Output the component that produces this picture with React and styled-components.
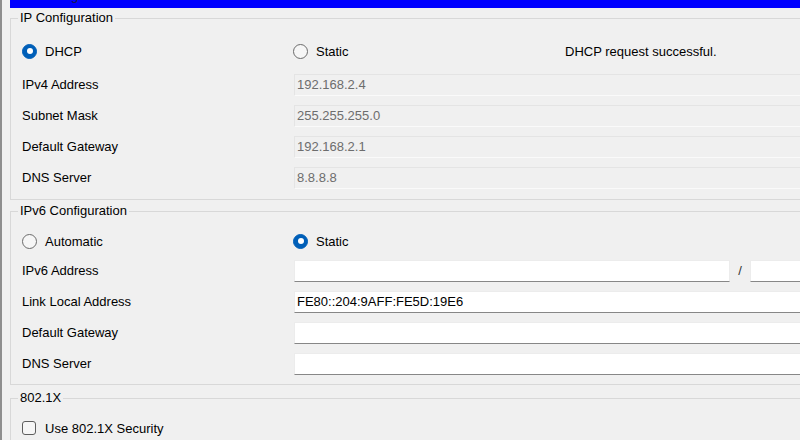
import styled, { createGlobalStyle } from "styled-components";

const GlobalStyle = createGlobalStyle`
  html, body {
    margin: 0;
    background: #f0f0f0;
    overflow: hidden;
  }
  body {
    font-family: "Liberation Sans", Arial, sans-serif;
    font-size: 13px;
    color: #000;
  }
`;

const ipv4Fields = [
  { label: "IPv4 Address", value: "192.168.2.4" },
  { label: "Subnet Mask", value: "255.255.255.0" },
  { label: "Default Gateway", value: "192.168.2.1" },
  { label: "DNS Server", value: "8.8.8.8" },
];

const ipv6Fields = [
  { label: "Link Local Address", value: "FE80::204:9AFF:FE5D:19E6" },
  { label: "Default Gateway", value: "" },
  { label: "DNS Server", value: "" },
];

const RadioOption = ({ checked, children }) => (
  <Option>
    <Radio $checked={checked} />
    <span>{children}</span>
  </Option>
);

const Field = ({ label, value, disabled }) => (
  <FieldRow>
    <Label>{label}</Label>
    <TextBox readOnly value={value} disabled={disabled} />
  </FieldRow>
);

const App = () => {
  return (
    <>
      <GlobalStyle />
      <Window>
        <Content>
          <TitleBar>
            <TitleText>IP Configuration</TitleText>
          </TitleBar>

          <Group $top={2}>
            <Legend>IP Configuration</Legend>
            <GroupBody $padTop={13} $padBottom={6}>
              <RadioRow $after={6}>
                <RadioOption checked>DHCP</RadioOption>
                <RadioOption>Static</RadioOption>
                <Status>DHCP request successful.</Status>
              </RadioRow>
              {ipv4Fields.map((f) => (
                <Field key={f.label} label={f.label} value={f.value} disabled />
              ))}
            </GroupBody>
          </Group>

          <Group $top={3}>
            <Legend>IPv6 Configuration</Legend>
            <GroupBody $padTop={10} $padBottom={5}>
              <RadioRow $after={2}>
                <RadioOption>Automatic</RadioOption>
                <RadioOption checked>Static</RadioOption>
              </RadioRow>
              <FieldRow>
                <Label>IPv6 Address</Label>
                <SplitInput>
                  <TextBox readOnly value="" $width={436} />
                  <Slash>/</Slash>
                  <TextBox readOnly value="" />
                </SplitInput>
              </FieldRow>
              {ipv6Fields.map((f) => (
                <Field key={f.label} label={f.label} value={f.value} />
              ))}
            </GroupBody>
          </Group>

          <Group $top={5}>
            <Legend>802.1X</Legend>
            <GroupBody $padTop={10} $padBottom={6}>
              <CheckRow>
                <CheckBox />
                <span>Use 802.1X Security</span>
              </CheckRow>
            </GroupBody>
          </Group>
        </Content>
      </Window>
    </>
  );
};

const Window = styled.div`
  width: 800px;
  height: 440px;
  overflow: hidden;
  box-sizing: border-box;
  border-left: 2px solid #8e8e8e;
  background: #f0f0f0;
`;

const Content = styled.div`
  width: 860px;
  padding-left: 8px;
`;

const TitleBar = styled.div`
  height: 8px;
  background: #0000ff;
  overflow: hidden;
  padding-left: 15px;
`;

const TitleText = styled.div`
  font-size: 13px;
  line-height: 13px;
  margin-top: -11px;
  color: #1a1a40;
`;

const Group = styled.fieldset`
  margin: ${(p) => p.$top}px 0 0;
  padding: 0;
  border: 1px solid #d8d8d8;
  min-width: 0;
`;

const Legend = styled.legend`
  margin-left: 7px;
  padding: 0 2px;
  font-size: 13px;
  line-height: 16px;
`;

const GroupBody = styled.div`
  padding: ${(p) => p.$padTop}px 0 ${(p) => p.$padBottom}px 11px;
  display: flex;
  flex-direction: column;
`;

const RadioRow = styled.div`
  display: grid;
  grid-template-columns: 271px 272px auto;
  align-items: center;
  height: 24px;
  margin-bottom: ${(p) => p.$after}px;
`;

const Option = styled.label`
  display: flex;
  align-items: center;
  gap: 8px;
`;

const Radio = styled.span`
  width: 15px;
  height: 15px;
  box-sizing: border-box;
  border-radius: 50%;
  flex-shrink: 0;
  position: relative;
  background: ${(p) => (p.$checked ? "#005fb8" : "#f6f6f6")};
  border: 1px solid ${(p) => (p.$checked ? "#005fb8" : "#6b6b6b")};

  &::after {
    content: "";
    display: ${(p) => (p.$checked ? "block" : "none")};
    position: absolute;
    left: 3.5px;
    top: 3.5px;
    width: 6px;
    height: 6px;
    border-radius: 50%;
    background: #fff;
  }
`;

const Status = styled.span`
  white-space: nowrap;
`;

const FieldRow = styled.div`
  display: grid;
  grid-template-columns: 272px 1fr;
  align-items: center;
  height: 31px;
`;

const Label = styled.span`
  white-space: nowrap;
`;

const TextBox = styled.input`
  box-sizing: border-box;
  height: 22px;
  width: ${(p) => (p.$width ? `${p.$width}px` : "100%")};
  flex: ${(p) => (p.$width ? "none" : "1")};
  margin: 0;
  padding: 0 2px;
  font-family: "Liberation Sans", Arial, sans-serif;
  font-size: 13px;
  color: #000;
  background: #fff;
  border: 1px solid #ececec;
  border-bottom-color: #878787;
  border-radius: 0;
  outline: none;

  &:disabled {
    background: #f0f0f0;
    color: #6d6d6d;
    border-color: #e4e4e4;
    border-bottom-color: #fafafa;
  }
`;

const SplitInput = styled.div`
  display: flex;
  align-items: center;
`;

const Slash = styled.span`
  width: 20px;
  text-align: center;
  color: #333;
`;

const CheckRow = styled.label`
  display: flex;
  align-items: center;
  gap: 9px;
  height: 24px;
`;

const CheckBox = styled.span`
  width: 14px;
  height: 14px;
  box-sizing: border-box;
  border: 1px solid #5e5e5e;
  border-radius: 3px;
  background: #f6f6f6;
  flex-shrink: 0;
`;

export default App;
